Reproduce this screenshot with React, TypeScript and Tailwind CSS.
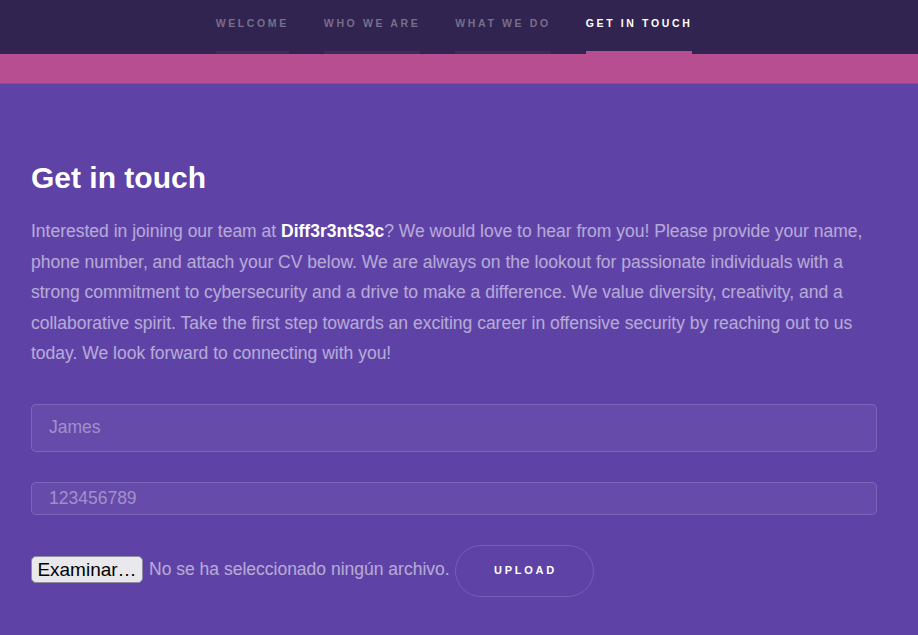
const LINKS = [
  { href: "#intro", label: "Welcome" },
  { href: "#one", label: "Who we are" },
  { href: "#two", label: "What we do" },
  { href: "#three", label: "Get in touch", active: true },
];

function Nav() {
  return (
    <header className="h-[54px] bg-[#312450]">
      <nav className="flex h-full justify-center gap-[35px] pr-[10px]">
        {LINKS.map((l) => (
          <a
            key={l.href}
            href={l.href}
            className={
              "flex h-full flex-col justify-between pt-[16px] text-[10.5px] font-bold uppercase leading-[14px] tracking-[0.25em] " +
              (l.active ? "text-white" : "text-white/35")
            }
          >
            <span>{l.label}</span>
            <span
              className={
                "block h-[3px] w-full " +
                (l.active ? "bg-[#b74e91]" : "bg-white/5")
              }
            />
          </a>
        ))}
      </nav>
    </header>
  );
}

export default function App() {
  return (
    <div className="min-h-[635px] bg-[#5e42a6] font-['Liberation_Sans',Arial,sans-serif]">
      <Nav />
      <div className="h-[30px] border-b border-[#8b4a9f] bg-[#b74e91]" />

      <section className="px-[31px] pt-[71px] pb-10">
        <div className="w-[846px]">
          <h2 className="text-[30px] font-bold leading-[45px] text-white">
            Get in touch
          </h2>
          <p className="mt-[16px] text-[17.5px] leading-[30.5px] text-white/55">
            Interested in joining our team at{" "}
            <strong className="font-bold text-white">Diff3r3ntS3c</strong>? We
            would love to hear from you! Please provide your name, phone
            number, and attach your CV below. We are always on the lookout for
            passionate individuals with a strong commitment to cybersecurity
            and a drive to make a difference. We value diversity, creativity,
            and a collaborative spirit. Take the first step towards an exciting
            career in offensive security by reaching out to us today. We look
            forward to connecting with you!
          </p>

          <form className="mt-[35px] flex flex-col gap-[30px]">
            <input
              type="text"
              placeholder="James"
              className="h-[48px] w-full rounded-[5px] border border-white/15 bg-white/5 px-[17px] text-[17.5px] text-white outline-none placeholder:text-white/40"
            />
            <input
              type="text"
              placeholder="123456789"
              className="h-[33px] w-full rounded-[5px] border border-white/15 bg-white/5 px-[17px] text-[17.5px] text-white outline-none placeholder:text-white/40"
            />

            <div className="flex items-center">
              <button
                type="button"
                className="-mt-[2px] h-[27px] w-[112px] rounded-[5px] border border-[#8f8f9d] bg-[#e9e9ed] text-[19px] leading-none text-black"
              >
                Examinar…
              </button>
              <span className="ml-[6px] -mt-[2px] text-[17.5px] text-white/55">
                No se ha seleccionado ningún archivo.
              </span>
              <button
                type="button"
                className="ml-[5px] h-[52px] w-[139px] rounded-full border border-white/15 pl-[0.25em] text-[11px] font-bold uppercase tracking-[0.25em] text-white"
              >
                Upload
              </button>
            </div>
          </form>
        </div>
      </section>
    </div>
  );
}
